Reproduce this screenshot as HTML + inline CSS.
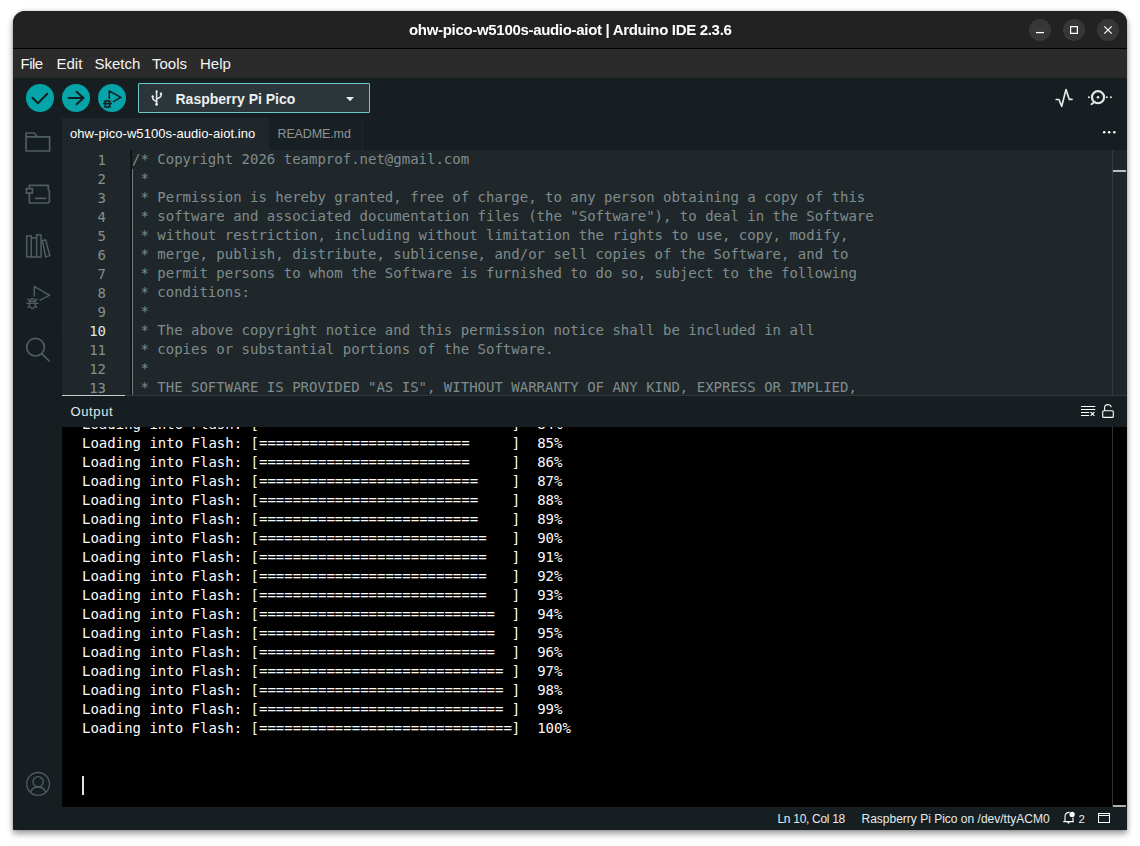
<!DOCTYPE html>
<html lang="en">
<head>
<meta charset="utf-8">
<title>ohw-pico-w5100s-audio-aiot | Arduino IDE 2.3.6</title>
<style>
*{box-sizing:border-box;margin:0;padding:0}
html,body{width:1140px;height:846px;overflow:hidden;background:#fff}
body{font-family:"Liberation Sans","DejaVu Sans",sans-serif;position:relative}
.abs{position:absolute;white-space:pre}
#win{position:absolute;left:13px;top:11px;width:1114px;height:819px;background:#171e21;border-radius:12px 12px 0 0;box-shadow:0 0 2px rgba(0,0,0,.22),0 4px 6px rgba(0,0,0,.34),0 1px 7px rgba(0,0,0,.10);overflow:hidden}
#title{position:absolute;left:0;top:0;width:1114px;height:37px;background:#222222}
#title span{position:absolute;left:395.8px;top:0px;line-height:37px;color:#fff;font-weight:bold;font-size:15px;letter-spacing:-0.315px;white-space:pre;will-change:transform}
#tline{position:absolute;left:0;top:37px;width:1114px;height:1px;background:#000}
.wbtn{position:absolute;top:8px;width:22px;height:22px;border-radius:11px;background:#373737}
#menu{position:absolute;left:0;top:38px;width:1114px;height:29px;background:#2b2b2b;color:#f4f4f4;font-size:15px;line-height:29px}
#menu span{position:absolute;top:0;white-space:pre}
#toolbar{position:absolute;left:0;top:67px;width:1114px;height:40px;background:#171e21}
.cbtn{position:absolute;top:6px;width:28px;height:28px;border-radius:14px;background:#04a4a9}
#board{position:absolute;left:125px;top:5px;width:232px;height:30px;background:#2c353a;border:1px solid #6cc8ca;border-radius:1px;color:#ecf1f1;font-weight:bold;font-size:14px;line-height:28px}
#tabs{position:absolute;left:49px;top:107px;width:1065px;height:32px;background:#171e21;font-size:13px;line-height:32px}
.tab{position:absolute;top:0;height:32px}
#side{position:absolute;left:0;top:107px;width:49px;height:689px;background:#171e21}
#editor{position:absolute;left:49px;top:139px;width:1065px;height:246px;background:#1f272a;overflow:hidden;font-family:"DejaVu Sans Mono","Liberation Mono",monospace;font-size:14px;line-height:19px;color:#7f8c8d}
.ln{position:absolute;left:0;width:1050px;height:19px;white-space:pre}
.ln.cur{background:#20282b}
.ln .no{position:absolute;left:0;top:1px;width:44px;text-align:right;color:#858f90}
.ln.cur .no{color:#dfe6e6}
.ln .tx{position:absolute;left:70px}
#gline{position:absolute;left:68px;top:0;width:2px;height:246px;background:linear-gradient(90deg,#141a1c 0 1px,#0c1113 1px 2px)}
#guide{position:absolute;left:70px;top:19px;width:1px;height:227px;background:#757c7f}
#edsb{position:absolute;left:1050px;top:0;width:1px;height:246px;background:#353d40}
#edmark{position:absolute;left:1051px;top:20px;width:13px;height:2px;background:#b9bfbf}
#edsep{position:absolute;left:49px;top:384px;width:1065px;height:1px;background:#30383b}
#hscroll{position:absolute;left:49px;top:384px;width:63px;height:1.5px;background:#c9cdcd}
#outhead{position:absolute;left:49px;top:385px;width:1065px;height:31px;background:#171e21;color:#e2e8e8;font-size:13px;letter-spacing:.62px;line-height:31px}
#output{position:absolute;left:49px;top:416px;width:1065px;height:380px;background:#000;overflow:hidden;font-family:"DejaVu Sans Mono","Liberation Mono",monospace;font-size:14px;line-height:19px;color:#fbfbfb}
.ol{position:absolute;left:20px;height:19px;white-space:pre}
#cursor{position:absolute;left:20px;top:349px;width:2px;height:19px;background:#e0e5e5}
#outsb{position:absolute;left:1050px;top:0;width:1px;height:380px;background:#333}
#outmark{position:absolute;left:1051px;top:378px;width:13px;height:2px;background:#aab1b1}
#status{position:absolute;left:0;top:796px;width:1114px;height:23px;background:#171e21;color:#e6ebeb;font-size:12px;line-height:23px}
#status span{top:1px}
#icons{position:absolute;left:0;top:0;width:1140px;height:846px;pointer-events:none}
</style>
</head>
<body>
<div id="win">
  <div id="title"><span>ohw-pico-w5100s-audio-aiot | Arduino IDE 2.3.6</span>
    <div class="wbtn" style="left:1016px"></div><div class="wbtn" style="left:1050px"></div><div class="wbtn" style="left:1084px"></div>
  </div>
  <div id="tline"></div>
  <div id="menu"><span style="left:7.5px;letter-spacing:-.5px">File</span><span style="left:43.5px">Edit</span><span style="left:81.5px">Sketch</span><span style="left:139px">Tools</span><span style="left:187px">Help</span></div>
  <div id="toolbar">
    <div class="cbtn" style="left:13px"></div>
    <div class="cbtn" style="left:49px"></div>
    <div class="cbtn" style="left:85px"></div>
    <div id="board"><span class="abs" style="left:36.5px;top:1px">Raspberry Pi Pico</span></div>
  </div>
  <div id="tabs">
    <div class="tab" style="left:0;width:207px;background:#1f272a;color:#fff"><span class="abs" style="left:8px;letter-spacing:.06px">ohw-pico-w5100s-audio-aiot.ino</span></div>
    <div class="tab" style="left:207px;width:94px;background:#192023;color:#8c9697;border-right:1px solid #21282b"><span class="abs" style="left:8.5px;font-size:12.5px;letter-spacing:-.12px">README.md</span></div>
  </div>
  <div id="side"></div>
  <div id="editor">
    <div class="ln" style="top:0px"><span class="no">1</span><span class="tx">/* Copyright 2026 teamprof.net@gmail.com</span></div>
    <div class="ln" style="top:19px"><span class="no">2</span><span class="tx"> *</span></div>
    <div class="ln" style="top:38px"><span class="no">3</span><span class="tx"> * Permission is hereby granted, free of charge, to any person obtaining a copy of this</span></div>
    <div class="ln" style="top:57px"><span class="no">4</span><span class="tx"> * software and associated documentation files (the "Software"), to deal in the Software</span></div>
    <div class="ln" style="top:76px"><span class="no">5</span><span class="tx"> * without restriction, including without limitation the rights to use, copy, modify,</span></div>
    <div class="ln" style="top:95px"><span class="no">6</span><span class="tx"> * merge, publish, distribute, sublicense, and/or sell copies of the Software, and to</span></div>
    <div class="ln" style="top:114px"><span class="no">7</span><span class="tx"> * permit persons to whom the Software is furnished to do so, subject to the following</span></div>
    <div class="ln" style="top:133px"><span class="no">8</span><span class="tx"> * conditions:</span></div>
    <div class="ln" style="top:152px"><span class="no">9</span><span class="tx"> *</span></div>
    <div class="ln cur" style="top:171px"><span class="no">10</span><span class="tx"> * The above copyright notice and this permission notice shall be included in all</span></div>
    <div class="ln" style="top:190px"><span class="no">11</span><span class="tx"> * copies or substantial portions of the Software.</span></div>
    <div class="ln" style="top:209px"><span class="no">12</span><span class="tx"> *</span></div>
    <div class="ln" style="top:228px"><span class="no">13</span><span class="tx"> * THE SOFTWARE IS PROVIDED "AS IS", WITHOUT WARRANTY OF ANY KIND, EXPRESS OR IMPLIED,</span></div>
    <div id="gline"></div><div id="guide"></div><div id="edsb"></div><div id="edmark"></div>
  </div>
  <div id="edsep"></div><div id="hscroll"></div>
  <div id="outhead"><span class="abs" style="left:8.5px">Output</span></div>
  <div id="output">
    <div class="ol" style="top:-12px">Loading into Flash: [=========================     ]  84%</div>
    <div class="ol" style="top:7px">Loading into Flash: [=========================     ]  85%</div>
    <div class="ol" style="top:26px">Loading into Flash: [=========================     ]  86%</div>
    <div class="ol" style="top:45px">Loading into Flash: [==========================    ]  87%</div>
    <div class="ol" style="top:64px">Loading into Flash: [==========================    ]  88%</div>
    <div class="ol" style="top:83px">Loading into Flash: [==========================    ]  89%</div>
    <div class="ol" style="top:102px">Loading into Flash: [===========================   ]  90%</div>
    <div class="ol" style="top:121px">Loading into Flash: [===========================   ]  91%</div>
    <div class="ol" style="top:140px">Loading into Flash: [===========================   ]  92%</div>
    <div class="ol" style="top:159px">Loading into Flash: [===========================   ]  93%</div>
    <div class="ol" style="top:178px">Loading into Flash: [============================  ]  94%</div>
    <div class="ol" style="top:197px">Loading into Flash: [============================  ]  95%</div>
    <div class="ol" style="top:216px">Loading into Flash: [============================  ]  96%</div>
    <div class="ol" style="top:235px">Loading into Flash: [============================= ]  97%</div>
    <div class="ol" style="top:254px">Loading into Flash: [============================= ]  98%</div>
    <div class="ol" style="top:273px">Loading into Flash: [============================= ]  99%</div>
    <div class="ol" style="top:292px">Loading into Flash: [==============================]  100%</div>
    <div id="cursor"></div><div id="outsb"></div><div id="outmark"></div>
  </div>
  <div id="status"><span class="abs" style="left:764.5px;letter-spacing:-.3px">Ln 10, Col 18</span><span class="abs" style="left:848.5px">Raspberry Pi Pico on /dev/ttyACM0</span><span class="abs" style="left:1065.5px;font-size:11.5px">2</span></div>
</div>
<svg id="icons" viewBox="0 0 1140 846" fill="none" stroke-linecap="round" stroke-linejoin="round">
<!-- window buttons -->
<g stroke="#fff" stroke-width="1.3" stroke-linecap="butt">
  <path d="M1036 32.6H1044"/>
  <rect x="1070.6" y="26.6" width="6.8" height="6.8" stroke-width="1.2"/>
  <path d="M1104.3 26.3L1111.7 33.7M1111.7 26.3L1104.3 33.7" stroke-width="1.2"/>
</g>
<!-- toolbar buttons -->
<g stroke="#171e21" stroke-width="2">
  <path d="M32.4 97.8L38 103.2L47.3 93.7"/>
  <path d="M68.6 97.9H83.4M76.6 91.7L83.5 97.9L76.6 104.3"/>
  <g stroke-width="1.5">
    <path d="M109.3 98.4V90.8L120.9 97.4L113.4 101.6"/>
    <ellipse cx="107.4" cy="104.1" rx="2.35" ry="3.5"/>
    <path d="M103.7 103.6H111.2" stroke-width="1.6"/><path d="M104.2 101L105.3 101.9M110.6 101L109.5 101.9M104.2 107.1L105.3 106.2M110.6 107.1L109.5 106.2" stroke-width="1.2"/>
  </g>
</g>
<!-- usb + caret -->
<g stroke="#e6ecec" stroke-width="1.5">
  <path d="M156.6 91V104"/>
  <path d="M152.7 97V98.2Q152.7 99.8 156.6 101.4"/>
  <path d="M161 94.6V95.6Q161 97.4 156.6 99"/>
</g>
<circle cx="156.6" cy="104.4" r="1.4" fill="#e6ecec"/>
<circle cx="152.7" cy="96.4" r="1.2" fill="#e6ecec"/>
<rect x="159.9" y="92.6" width="2.2" height="2.2" fill="#e6ecec"/>
<path d="M155.2 92.2L156.6 90L158 92.2Z" fill="#e6ecec"/>
<path d="M346 97H354L350 101.2Z" fill="#e6ecec"/>
<!-- plotter / monitor -->
<path d="M1056.2 99.5H1058.9L1061.7 106.3L1066 89.6L1069.2 99.3H1072" stroke="#e3eaea" stroke-width="1.7"/>
<circle cx="1098" cy="97.2" r="6.05" stroke="#e3eaea" stroke-width="2.2"/>
<path d="M1094.3 102.1L1091.5 104.3" stroke="#e3eaea" stroke-width="1.8"/>
<g fill="#e3eaea"><circle cx="1098" cy="97.2" r="1.3"/><circle cx="1088.9" cy="97.2" r="1"/><circle cx="1106.9" cy="97.2" r="1"/><circle cx="1110.9" cy="97.2" r="1"/></g>
<!-- tab kebab -->
<g fill="#fff"><circle cx="1104.2" cy="132.3" r="1.25"/><circle cx="1109.2" cy="132.3" r="1.25"/><circle cx="1114.3" cy="132.3" r="1.25"/></g>
<!-- sidebar -->
<g stroke="#4f5d65" stroke-width="1.7" stroke-linejoin="miter" stroke-linecap="butt">
  <path d="M26.1 136.9V133H34.2L37.4 136.9M26.1 136.9H49.6V151H26.1Z"/>
  <path d="M29.4 188.6V185.3H48.3V189.9L49.4 191V201.8L48.3 203H29.4V193.2"/>
  <rect x="26.4" y="188.7" width="6" height="4.4"/>
  <path d="M35.6 198.3H45.7" stroke-linecap="round"/>
  <g stroke-width="1.5"><rect x="26.7" y="235.9" width="4.6" height="21"/>
  <path d="M31.3 238.1H36.6M31.3 256.9H36.6"/>
  <rect x="36.6" y="234.9" width="4.4" height="22"/>
  <path d="M42.4 240.6L45.6 239.8L49.8 255.6L45.7 256.9Z"/></g>
  <g stroke-width="1.4"><path d="M34.3 296.4V286.4L49.5 295.3L39.6 300.4"/>
    <ellipse cx="32.4" cy="303.5" rx="3.1" ry="5"/>
    <path d="M26.2 303.4H38.6M27.4 298.8L30 300.9M37.4 298.8L34.8 300.9M27.4 307.8L30 305.9M37.4 307.8L34.8 305.9M29.6 301.2H35.2"/></g>
  <circle cx="35.5" cy="347.2" r="8.8"/>
  <path d="M42 353.9L49.2 361" stroke-linecap="round"/>
  <g stroke-width="1.3"><circle cx="38.1" cy="783.9" r="11.4"/><circle cx="38.1" cy="781.8" r="5.1"/><path d="M30.6 792.4Q32 787 38.1 787Q44.2 787 45.6 792.4"/></g>
</g>
<!-- output header icons -->
<g stroke="#fff" stroke-width="1" stroke-linecap="butt">
  <path d="M1081 406.5H1095.3M1081 409.5H1095.3M1081 412.5H1089.2M1081 415.5H1089.2"/>
  <path d="M1090.6 412L1094.4 415.8M1094.4 412L1090.6 415.8" stroke-width="1.1"/>
</g>
<g stroke="#fff" stroke-width="1.1">
  <rect x="1102.7" y="410.7" width="10.6" height="6.7" rx="1"/>
  <path d="M1104.6 410.5V407.6Q1104.6 404.6 1108 404.6Q1110.6 404.6 1111.3 406.8"/>
</g>
<!-- status icons -->
<g stroke="#fff" stroke-width="1.1" stroke-linecap="butt" stroke-linejoin="miter">
  <path d="M1063.2 821.6H1073.8M1065 821.6V816.5Q1065 812.6 1069.6 812.4M1073 817.5V821.6"/>
  <path d="M1067 822.2L1068.5 824L1070 822.2Z" fill="#fff" stroke="none"/>
  <rect x="1098.5" y="813.5" width="11" height="9" stroke-width="1"/>
  <path d="M1098.5 815.5H1109.5" stroke-width="1"/>
</g>
<circle cx="1072.1" cy="814.4" r="2.6" fill="#fff"/>

</svg>
</body>
</html>
